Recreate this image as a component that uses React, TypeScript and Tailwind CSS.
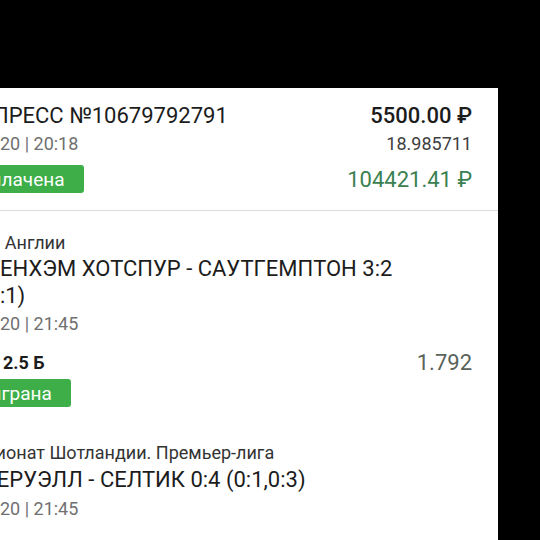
import React from "react";

const Badge = ({ children }: { children: React.ReactNode }) => (
  <div className="inline-flex h-[28px] items-center rounded-[3px] bg-[#3dae48] pl-[14px] pr-[19px] text-[19px] leading-none text-white">
    {children}
  </div>
);

export default function App() {
  return (
    <div
      className="h-[540px] w-[540px] overflow-hidden bg-black"
      style={{ fontFamily: "Roboto, 'Noto Sans', sans-serif" }}
    >
      <div className="mt-[88px] ml-[-60px] w-[558px] bg-white">
        {/* express header */}
        <div className="flex justify-between border-b border-[#dcdcdc] pt-[14px] pb-[17px] pl-[10px] pr-[26px]">
          <div>
            <div className="text-[22px] leading-[27px] text-[#1c1c1c]">ЭКСПРЕСС №10679792791</div>
            <div className="mt-[4px] text-[18px] leading-[22px] text-[#707070]">05.12.20 | 20:18</div>
            <div className="mt-[10px]">
              <Badge>Выплачена</Badge>
            </div>
          </div>
          <div className="flex flex-col items-end">
            <div className="text-[22px] font-medium leading-[27px] text-[#1c1c1c]">5500.00 ₽</div>
            <div className="mt-[4px] text-[18px] leading-[22px] text-[#404040]">18.985711</div>
            <div className="mt-[11px] text-[22px] leading-[27px] text-[#3a8050]">104421.41 ₽</div>
          </div>
        </div>

        {/* first event */}
        <div className="pt-[21px] pl-[10px] pr-[26px]">
          <div className="text-[18px] leading-[22px] text-[#333]">Чемп. Англии</div>
          <div className="mt-[1px] pl-[30px] pr-[40px] indent-[-34px] text-[22px] leading-[27px] text-[#1c1c1c]">
            ТОТТЕНХЭМ ХОТСПУР - САУТГЕМПТОН 3:2 (2:1)
          </div>
          <div className="mt-[4px] text-[18px] leading-[22px] text-[#707070]">05.12.20 | 21:45</div>
          <div className="mt-[14px] flex h-[27px] items-center justify-between">
            <div className="text-[18px] font-bold leading-[22px] text-[#1c1c1c]">Тотал 2.5 Б</div>
            <div className="text-[22px] leading-[27px] text-[#5a635b]">1.792</div>
          </div>
          <div className="mt-[3px]">
            <Badge>Выиграна</Badge>
          </div>
        </div>

        {/* second event */}
        <div className="mt-[35px] pb-[40px] pl-[10px] pr-[26px]">
          <div className="text-[18px] leading-[22px] text-[#333]">Чемпионат Шотландии. Премьер-лига</div>
          <div className="mt-[2px] text-[22px] leading-[27px] text-[#1c1c1c]">МАЗЕРУЭЛЛ - СЕЛТИК 0:4 (0:1,0:3)</div>
          <div className="mt-[5px] text-[18px] leading-[22px] text-[#707070]">05.12.20 | 21:45</div>
        </div>
      </div>
    </div>
  );
}
